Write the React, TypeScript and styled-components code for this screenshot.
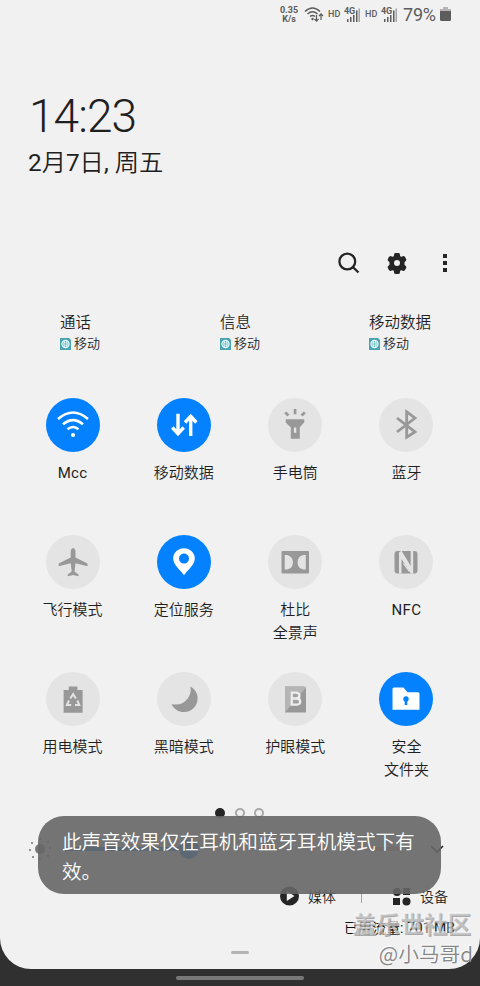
import React from 'react';
import styled, { createGlobalStyle } from 'styled-components';

const GlobalStyle = createGlobalStyle`
  * { box-sizing: border-box; }
  body { margin: 0; background: #303030; color: #1f1f1f;
    font-family: Roboto, "Noto Sans CJK SC", sans-serif; font-weight: 350; }
  svg { display: block; flex: none; }
`;

const Screen = styled.div`
  position: relative;
  width: 480px;
  height: 986px;
  overflow: hidden;
  background: #303030;
`;
const Panel = styled.main`
  display: flex;
  flex-direction: column;
  height: 969px;
  background: #f1f1f1;
  border-radius: 0 0 31px 31px;
`;
const StatusBar = styled.header`
  display: flex;
  align-items: center;
  height: 29px;
  padding-left: 279px;
  color: #5c5c5c;
`;
const Speed = styled.div`
  width: 20px;
  margin-right: 5px;
  font: 700 9px/9px Roboto, sans-serif;
  text-align: center;
  white-space: nowrap;
`;
const Hd = styled.span`
  width: 16px;
  margin: -2px 0 0 4px;
  font: 500 9px/12px Roboto, sans-serif;
`;
const Percent = styled.span`
  width: 37px;
  margin-left: 5px;
  font: 400 18px/20px Roboto, sans-serif;
  letter-spacing: -0.2px;
`;
const Clock = styled.section`
  height: 216px;
  padding: 60px 0 0 28px;
`;
const Time = styled.div`
  padding-left: 1px;
  font-size: 46px;
  font-weight: 300;
  line-height: 54px;
  letter-spacing: -0.9px;
`;
const DateLine = styled.div`
  margin-top: 4px;
  font-size: 24.3px;
  line-height: 32px;
`;
const Figure = styled.span`
  font-weight: 400;
`;
const Tools = styled.nav`
  display: flex;
  justify-content: flex-end;
  gap: 24px;
  height: 36px;
  align-items: center;
  padding-right: 23px;
`;
const SimRow = styled.section`
  display: flex;
  height: 117px;
  padding: 30px 0 0 60px;
`;
const Sim = styled.div<{ $width: number }>`
  width: ${p => p.$width}px;
  flex: none;
`;
const SimTitle = styled.div`
  height: 22px;
  font-size: 15.5px;
  line-height: 24px;
`;
const Carrier = styled.div`
  display: flex;
  align-items: center;
  gap: 3px;
  height: 22px;
  font-size: 13px;
  line-height: 22px;
`;
const Tiles = styled.section`
  display: grid;
  grid-template-columns: repeat(4, 111.3px);
  grid-auto-rows: 137px;
  justify-content: center;
  height: 406px;
  margin-right: 1px;
`;
const Tile = styled.div`
  display: flex;
  flex-direction: column;
  align-items: center;
`;
const Disc = styled.div<{ $on?: boolean }>`
  display: grid;
  place-items: center;
  width: 54px;
  height: 54px;
  margin-bottom: 10px;
  border-radius: 50%;
  background: ${p => (p.$on ? '#0381fe' : '#e4e4e4')};
  color: ${p => (p.$on ? '#fff' : '#989898')};
`;
const Label = styled.div<{ $latin: boolean }>`
  font-size: 15px;
  font-weight: ${p => (p.$latin ? 400 : 350)};
  letter-spacing: ${p => (p.$latin ? '0.3px' : 'normal')};
  line-height: 23px;
  text-align: center;
  white-space: pre-line;
`;
const Pager = styled.div`
  display: flex;
  justify-content: center;
  align-items: center;
  gap: 9.7px;
  height: 18px;
  padding-right: 1px;
`;
const Dot = styled.span<{ $active?: boolean }>`
  width: 10px;
  height: 10px;
  border-radius: 50%;
  border: 2px solid ${p => (p.$active ? '#252525' : '#a8a8a8')};
  background: ${p => (p.$active ? '#252525' : 'transparent')};
`;
const Brightness = styled.div`
  display: flex;
  align-items: center;
  height: 53px;
  padding-left: 28px;
`;
const Track = styled.div`
  display: flex;
  align-items: center;
  width: 335px;
  height: 4px;
  margin: 0 30px 0 13px;
  background: linear-gradient(90deg, #0381fe 0 121px, #e4e4e4 121px 300px, #dfb5ae 300px);
`;
const Thumb = styled.span`
  width: 20px;
  height: 20px;
  margin-left: 114px;
  border-radius: 50%;
  background: #0381fe;
`;
const Actions = styled.div`
  display: flex;
  align-items: center;
  height: 42px;
  padding-left: 280px;
  font-size: 14px;
`;
const Action = styled.div`
  display: flex;
  align-items: center;
  gap: 9px;
`;
const Divider = styled.span`
  width: 1px;
  height: 13px;
  margin: 0 30px 0 25px;
  background: #a5a5a5;
`;
const Usage = styled.div`
  height: 22px;
  padding: 1px 25px 0 0;
  color: #111;
  font-size: 14px;
  font-weight: 400;
  line-height: 20px;
  text-align: right;
`;
const Grip = styled.div`
  align-self: center;
  width: 18px;
  height: 3px;
  margin-top: 12px;
  border-radius: 2px;
  background: #b2b2b2;
`;
const HomeBar = styled.div`
  width: 128px;
  height: 4px;
  margin: 7px auto 0;
  border-radius: 2px;
  background: #797979;
`;
const Toast = styled.div`
  position: absolute;
  left: 38px;
  top: 816px;
  width: 403px;
  height: 78px;
  padding: 12px 24px 0;
  border-radius: 26px;
  background: rgba(102, 102, 102, 0.9);
  color: #fff;
  font-size: 19.6px;
  line-height: 30px;
  word-break: break-all;
`;
const Watermark = styled.div<{ $top: number; $size: number; $right: number; $bold?: boolean }>`
  position: absolute;
  right: ${p => p.$right}px;
  top: ${p => p.$top}px;
  font: ${p => (p.$bold ? 700 : 350)} ${p => p.$size}px/30px "Noto Sans CJK SC", sans-serif;
  white-space: nowrap;
  color: ${p => (p.$bold ? 'rgba(215,215,215,0.5)' : '#868686')};
  text-shadow: ${p => (p.$bold ? '1px 1px 0 rgba(120,120,120,0.6), -1px -1px 0 rgba(255,255,255,0.5)' : '-1px -1px 0 #fff')};
`;

const WifiStatus = () => (
  <svg width="20" height="18" viewBox="0 0 20 18" fill="none" stroke="#5c5c5c" strokeWidth="1.5">
    <path d="M1 5.500Q8.500-1.500 16 5.500M3.500 8Q8.500 3.500 13.500 8M6 10.500Q8.500 8.500 11 10.500" />
    <circle cx="8.500" cy="13" r="1.200" fill="#5c5c5c" stroke="none" />
    <path d="M12.500 9v6m-2-2 2 2.200 2-2.200M17 14V8m-2 2 2-2.200 2 2.200" strokeWidth="1.200" />
  </svg>
);
const Signal = () => (
  <svg width="17" height="18" viewBox="0 0 17 18" fill="#5c5c5c">
    <text x="0" y="8" fontSize="9" fontWeight="700" fontFamily="Roboto" letterSpacing="-.2">4G</text>
    <path d="M3 13h1.500v3H3zM6 11h1.500v5H6zM9 9h1.500v7H9zM12 4.500h1.500V16H12z" />
    <path d="M14.500 2.500h1.500V16h-1.500z" opacity=".5" />
  </svg>
);
const Globe = () => (
  <svg width="11" height="12" viewBox="0 0 11 12" fill="none" stroke="#e8ffff">
    <path d="M0 0h9l2 2v10H0z" fill="#4ba3af" stroke="none" />
    <circle cx="5.500" cy="6" r="3.600" strokeWidth="1.100" />
    <ellipse cx="5.500" cy="6" rx="1.500" ry="3.600" strokeWidth=".9" />
    <path d="M2 6h7M2.500 4.200h6M2.500 7.800h6" strokeWidth=".7" />
  </svg>
);

const art: Record<string, React.ReactNode> = {
  wifi: <><path d="M5 14Q20 1 35 14M10 19.300Q20 11 30 19.300M14.500 24.200Q20 19.800 25.500 24.200" fill="none" stroke="currentColor" strokeWidth="2.500" /><circle cx="20" cy="30" r="2.100" /></>,
  data: <path d="M14 8.700V28M8.300 22.500 14 28.700l5.700-6.200M26.700 31V12M21 17.500l5.700-6.200 5.700 6.200" fill="none" stroke="currentColor" strokeWidth="3.400" />,
  torch: <><path d="M18.700 4h2.700v5.300h-2.700zM9.200 8.200l2-1.600 3.200 3-2 1.800zM28.800 6.600l2 1.600-3.200 3.200-2-1.800zM10.700 14.300h18.600v3l-4.500 5v11.500h-9V22.500l-5.100-5z" /><path d="M18.900 22.500h2.400v5.300h-2.400z" fill="#e4e4e4" /></>,
  bluetooth: <path d="M11 13 29 27 20.700 32.300V6.800L29 13 11 27" fill="none" stroke="currentColor" strokeWidth="2.800" />,
  plane: <path d="M17.700 9q.6-3 2.400-3t2.400 3v6.500l12 6v2.800l-12-3-1 8.200 4 3v1.800L20.100 33l-5.400 1.300v-1.800l4-3-1-8.200-12 3v-2.800l12-6z" />,
  pin: <path fillRule="evenodd" d="M20 6.200c-6 0-10.800 4.400-10.800 10.200C9.200 23 17 28.500 20 33.200c3-4.700 10.800-10.200 10.800-16.800C30.800 10.600 26 6.200 20 6.200zm0 5.400a5 5 0 1 1 0 10 5 5 0 0 1 0-10z" />,
  dolby: <><rect x="6.500" y="9" width="27.500" height="22.500" rx="1" /><path d="M9.700 13c5-.2 8.200 2.400 8.200 7.300s-3.200 7.500-8.200 7.300zM30.800 13c-5-.2-8.200 2.400-8.200 7.300s3.200 7.500 8.200 7.300z" fill="#e4e4e4" /></>,
  nfc: <><rect x="8.500" y="9" width="23" height="22.500" rx="3" /><path d="M13 31.600V10.500L15.500 8.700 24.700 24V8.700h2.500V31.600h-2.400L15.500 17v14.600z" fill="#e4e4e4" /><path d="m17.500 22.500 5.500 7.500v-2l-5.500-7.500z" fill="#e4e4e4" /></>,
  recycle: <><path d="M10.600 11h5.200V7.500h8.600V11h5.200v22.800H10.600z" /><path d="m17.300 19.500 2.800-4.300 2.800 4.300M24.300 21.500l2 4.500h-4.300M18.200 26h-4.300l2-4.500" fill="none" stroke="#e4e4e4" strokeWidth="2" /></>,
  moon: <path d="M26.300 7.600C31 10 33.600 14.400 33.600 19.500c0 7.500-5.800 13.600-13.600 13.600-5.400 0-10.300-3.200-12.500-8.200 6.500 1.600 12-.2 15.500-4.400 3.400-4 4.500-8.800 3.300-12.900z" />,
  filter: <><path d="M10 7.500h18.500q2.500 0 2.500 2.200V33.500H10z" /><path d="M10 7.500h18.500q2.200 0 2.500 1L10 33.500z" fill="#b5b5b5" /><path d="M15 13h8q3 1 3 6v7l-10 .5z" fill="#a3a3a3" /><path d="M16.700 13.700h4.200c5 0 4.500 5.800 0 5.800h-4.200zv12h4.700c5.300 0 5-6.200 0-6.200" fill="none" stroke="#eee" strokeWidth="2.300" /></>,
  folder: <><path d="M6.500 10q0-1.500 1.500-1.500h9.500l4 4.800H32q1.500 0 1.500 1.500v16H6.500z" /><circle cx="20" cy="20" r="2.700" fill="#0381fe" /><path d="M18.700 20h2.600v6h-2.600z" fill="#0381fe" /></>,
};

const tiles: { icon: string; label: string; on?: boolean }[] = [
  { icon: 'wifi', label: 'Mcc', on: true },
  { icon: 'data', label: '移动数据', on: true },
  { icon: 'torch', label: '手电筒' },
  { icon: 'bluetooth', label: '蓝牙' },
  { icon: 'plane', label: '飞行模式' },
  { icon: 'pin', label: '定位服务', on: true },
  { icon: 'dolby', label: '杜比\n全景声' },
  { icon: 'nfc', label: 'NFC' },
  { icon: 'recycle', label: '用电模式' },
  { icon: 'moon', label: '黑暗模式' },
  { icon: 'filter', label: '护眼模式' },
  { icon: 'folder', label: '安全\n文件夹', on: true },
];
const sims = [
  { title: '通话', width: 160 },
  { title: '信息', width: 149 },
  { title: '移动数据', width: 80 },
];

export default function App() {
  return (
    <Screen>
      <GlobalStyle />
      <Panel>
        <StatusBar>
          <Speed>0.35<br />K/s</Speed>
          <WifiStatus />
          <Hd>HD</Hd>
          <Signal />
          <Hd>HD</Hd>
          <Signal />
          <Percent>79%</Percent>
          <svg width="11" height="15" viewBox="0 0 11 15" fill="#5c5c5c">
            <path d="M3 0h5v2h3v3H0V2h3z" opacity=".4" />
            <path d="M0 4h11v8.500q0 1.500-1.500 1.500h-8Q0 14 0 12.500z" />
          </svg>
        </StatusBar>
        <Clock>
          <Time>14:23</Time>
          <DateLine><Figure>2</Figure>月<Figure>7</Figure>日<Figure>, </Figure>周五</DateLine>
        </Clock>
        <Tools>
          <svg width="24" height="24" viewBox="0 0 24 24" fill="none" stroke="#252525" strokeWidth="2.300">
            <circle cx="10.300" cy="10.500" r="7.900" />
            <path d="m15.800 16 5.700 5.500" />
          </svg>
          <svg width="24" height="24" viewBox="0 0 24 24" fill="#252525">
            <path fillRule="evenodd" d="m9.300 2.600 1.200-.6h3l1.200.6.5 2.600 1 .5 2.700-.8 1 .8 1.400 2.600-.1 1.300-1.700 1.600v2.600l1.700 1.600.1 1.300-1.400 2.600-1 .8-2.700-.8-1 .5-.5 2.600-1.200.6h-3l-1.200-.6-.5-2.600-1-.5-2.700.8-1-.8-1.400-2.600.1-1.300 1.700-1.600v-2.600L2.800 9.600l-.1-1.300 1.400-2.600 1-.8 2.700.8 1-.5zM12 9a3 3 0 1 0 0 6 3 3 0 0 0 0-6z" />
          </svg>
          <svg width="24" height="24" viewBox="0 0 24 24" fill="#252525">
            <path d="M10 3h4v4h-4zM10 10h4v4h-4zM10 17h4v4h-4z" />
          </svg>
        </Tools>
        <SimRow>
          {sims.map(s => (
            <Sim key={s.title} $width={s.width}>
              <SimTitle>{s.title}</SimTitle>
              <Carrier><Globe />移动</Carrier>
            </Sim>
          ))}
        </SimRow>
        <Tiles>
          {tiles.map(t => (
            <Tile key={t.label}>
              <Disc $on={t.on}>
                <svg width="40" height="40" viewBox="0 0 40 40" fill="currentColor">{art[t.icon]}</svg>
              </Disc>
              <Label $latin={/^[A-Za-z]+$/.test(t.label)}>{t.label}</Label>
            </Tile>
          ))}
        </Tiles>
        <Pager><Dot $active /><Dot /><Dot /></Pager>
        <Brightness>
          <svg width="24" height="24" viewBox="0 0 24 24" fill="#777">
            <circle cx="12" cy="12" r="5" />
            <g fill="#666">
              <circle cx="12" cy="2" r=".9" /><circle cx="12" cy="22" r=".9" /><circle cx="2" cy="13" r=".9" /><circle cx="22" cy="11" r=".9" />
              <circle cx="4" cy="6" r=".9" /><circle cx="20" cy="5" r=".9" /><circle cx="5" cy="20" r=".9" /><circle cx="20" cy="19" r=".9" />
            </g>
          </svg>
          <Track><Thumb /></Track>
          <svg width="14" height="10" viewBox="0 0 14 10" fill="none" stroke="#252525" strokeWidth="1.600"><path d="m1 2 6 6 6-6" /></svg>
        </Brightness>
        <Actions>
          <Action>
            <svg width="19" height="20" viewBox="0 0 19 20"><circle cx="9.500" cy="10" r="9.500" fill="#252525" /><path d="m6.800 5 7.700 5-7.700 5z" fill="#f1f1f1" /></svg>
            媒体
          </Action>
          <Divider />
          <Action>
            <svg width="19" height="19" viewBox="0 0 19 19" fill="#252525">
              <circle cx="5" cy="5" r="4" /><path d="M11 1h7v7h-7zM1 11h7v7H1z" /><circle cx="14.500" cy="14.500" r="4" />
            </svg>
            设备
          </Action>
        </Actions>
        <Usage>已用流量: 701 MB</Usage>
        <Grip />
      </Panel>
      <HomeBar />
      <Toast>此声音效果仅在耳机和蓝牙耳机模式下有效。</Toast>
      <Watermark $top={908} $size={23.700} $right={9} $bold>盖乐世社区</Watermark>
      <Watermark $top={938} $size={20.700} $right={7}>@小马哥d</Watermark>
    </Screen>
  );
}
